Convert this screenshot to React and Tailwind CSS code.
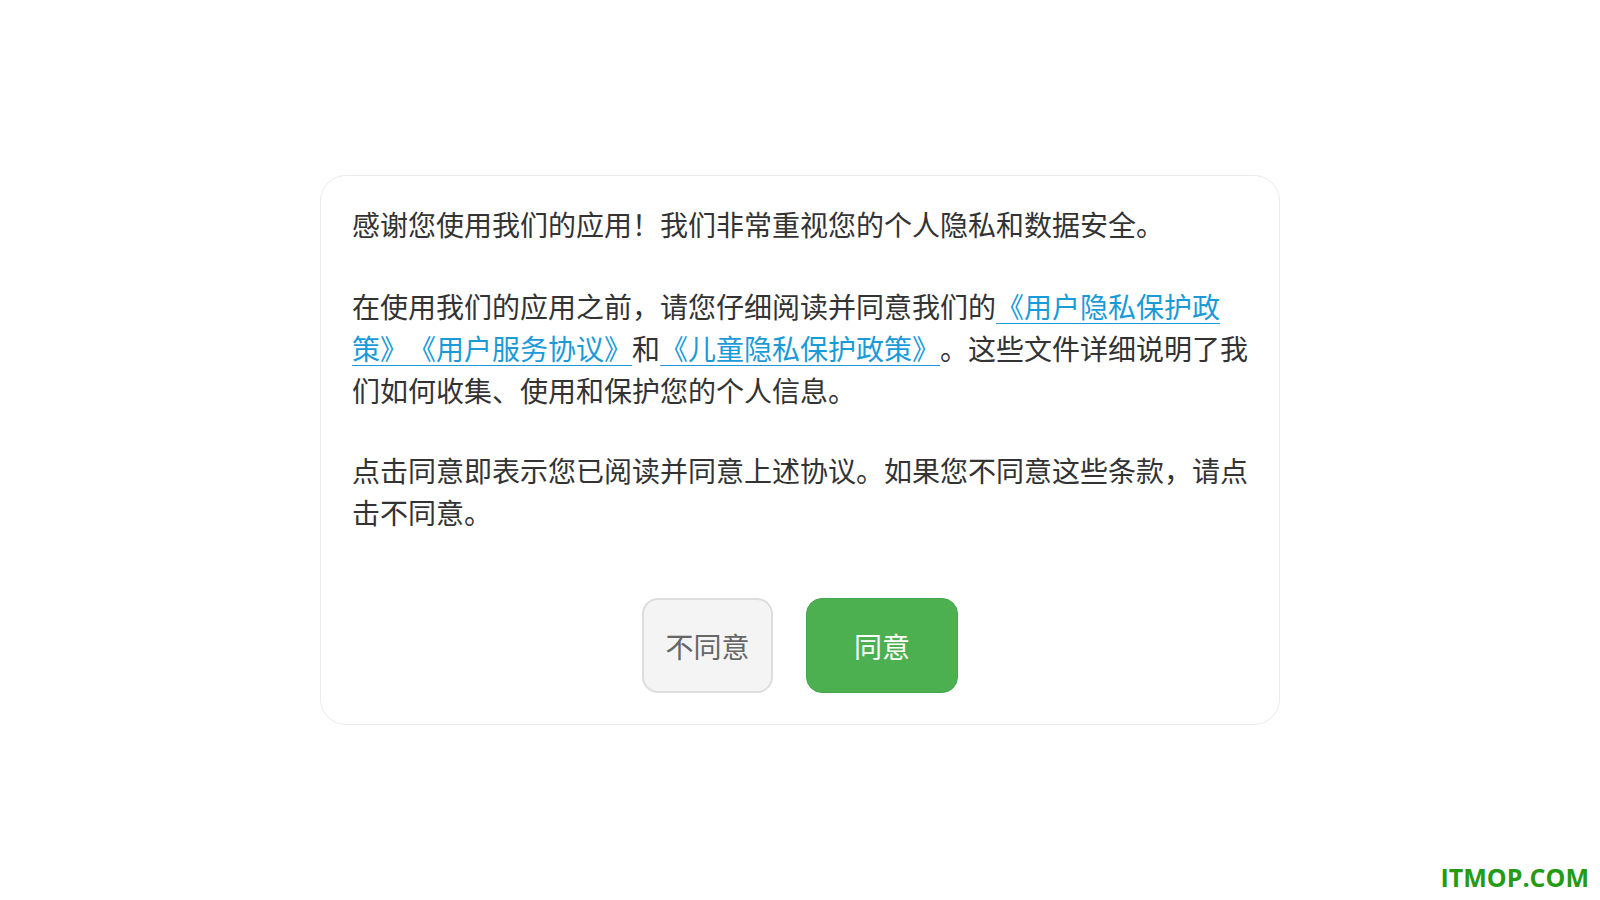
export default function App() {
  const linkCls = "text-[#1a9bd7] underline underline-offset-[5px] decoration-1";

  return (
    <div className="relative min-h-screen bg-white flex items-center justify-center font-['Noto_Sans_CJK_SC',sans-serif]">
      <div className="w-[960px] rounded-[26px] border border-[#ebebeb] bg-white pt-[27px] pb-[31px] pl-[31px] pr-[28px]">
        <div className="text-[28px] leading-[42px] text-[#333333] [text-spacing-trim:space-all]">
          <p className="mb-[40px]">
            感谢您使用我们的应用！我们非常重视您的个人隐私和数据安全。
          </p>

          <p className="mb-[38px]">
            在使用我们的应用之前，请您仔细阅读并同意我们的
            <a className={linkCls}>《用户隐私保护政策》</a>
            <a className={linkCls}>《用户服务协议》</a>和
            <a className={linkCls}>《儿童隐私保护政策》</a>
            。这些文件详细说明了我们如何收集、使用和保护您的个人信息。
          </p>

          <p>
            点击同意即表示您已阅读并同意上述协议。如果您不同意这些条款，请点击不同意。
          </p>
        </div>

        <div className="flex justify-center gap-[33px] mt-[65px] pr-[3px]">
          <button className="w-[131px] h-[95px] rounded-[16px] border-2 border-[#dddddd] bg-[#f4f4f4] text-[28px] text-[#666666]">
            不同意
          </button>
          <button className="w-[152px] h-[95px] rounded-[16px] border border-[#46a64a] bg-[#4caf50] text-[28px] text-white">
            同意
          </button>
        </div>
      </div>

      <div className="absolute right-[11px] bottom-[10px] font-['Open_Sans',sans-serif] font-bold text-[25px] leading-none text-[#259a14]">
        ITMOP.COM
      </div>
    </div>
  );
}
